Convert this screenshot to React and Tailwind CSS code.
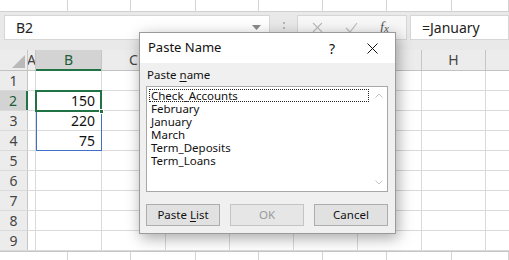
import React from "react";

const stripCols = [68, 63, 65, 63, 64, 64, 65, 57];
const gridCols = ["C", "D", "E", "F", "G", "H", ""];
const names = ["Check_Accounts", "February", "January", "March", "Term_Deposits", "Term_Loans"];
const values = { 2: "150", 3: "220", 4: "75" };

function Strip({ top }) {
  return (
    <div
      className={`flex bg-white ${top ? "h-[12px] border-b border-[#d0d0d0]" : "h-[9px] border-t border-[#c6c6c6]"}`}
    >
      {stripCols.map((w, i) => (
        <div
          key={i}
          style={{ width: w }}
          className="shrink-0 border-r border-[#d4d4d4]"
        />
      ))}
    </div>
  );
}

function FormulaBar() {
  return (
    <div className="h-[38px] bg-[#e9e9e9] flex items-start pt-[3px]">
      <div className="ml-[4px] w-[266px] h-[25px] bg-white border border-[#d6d6d6] flex items-center justify-between pl-[11px] pr-[8px]">
        <span className="text-[14px] text-[#222]">B2</span>
        <svg width="9" height="5" viewBox="0 0 9 5">
          <path d="M0 0h9L4.5 5z" fill="#8a8a8a" />
        </svg>
      </div>
      <div className="w-[27px] h-[25px] flex flex-col items-center justify-center gap-[3px]">
        <span className="w-[2px] h-[2px] bg-[#b5b5b5]" />
        <span className="w-[2px] h-[2px] bg-[#b5b5b5]" />
        <span className="w-[2px] h-[2px] bg-[#b5b5b5]" />
      </div>
      <div className="w-[110px] h-[25px] bg-[#f7f7f7] border border-[#d6d6d6] flex items-center pl-[14px] gap-[22px]">
        <svg width="11" height="11" viewBox="0 0 11 11">
          <path d="M1 1l9 9M10 1l-9 9" stroke="#bdbdbd" strokeWidth="1.2" />
        </svg>
        <svg width="13" height="11" viewBox="0 0 13 11">
          <path d="M1 6l4 4 7-9" stroke="#bdbdbd" strokeWidth="1.2" fill="none" />
        </svg>
        <span className="text-[14px] italic font-['Liberation_Serif',serif] text-[#555] leading-none">
          f<span className="text-[11px]">x</span>
        </span>
      </div>
      <div className="flex-1 ml-[3px] h-[25px] bg-white border border-[#d6d6d6] flex items-center pl-[11px]">
        <span className="text-[14px] text-[#222]">=January</span>
      </div>
    </div>
  );
}

function HeaderRow() {
  return (
    <div className="flex h-[21px] bg-[#ececec] border-b border-[#c2c2c2]">
      <div className="w-[28px] shrink-0 relative border-r border-[#c6c6c6]">
        <svg className="absolute right-[2px] bottom-[2px]" width="13" height="13" viewBox="0 0 13 13">
          <path d="M13 0V13H0z" fill="#b9b9b9" />
        </svg>
      </div>
      <div className="w-[8px] shrink-0 overflow-hidden border-r border-[#c6c6c6] flex justify-center">
        <span className="text-[14px] text-[#444] leading-[20px]">A</span>
      </div>
      <div className="w-[65px] shrink-0 bg-[#d3d3d3] border-b-2 border-[#217346] -mb-[1px] flex justify-center">
        <span className="text-[14px] text-[#1e5c3a] leading-[20px]">B</span>
      </div>
      {gridCols.map((c, i) => (
        <div key={i} className="w-[64px] shrink-0 border-l border-[#c6c6c6] flex justify-center">
          <span className="text-[14px] text-[#444] leading-[20px]">{c}</span>
        </div>
      ))}
    </div>
  );
}

function Row({ n }) {
  const sel = n === 2;
  return (
    <div className="flex h-[20px] border-b border-[#dadada]">
      <div
        className={`w-[28px] shrink-0 flex justify-center text-[14px] leading-[19px] ${
          sel
            ? "bg-[#d3d3d3] border-r-2 border-[#217346] text-[#1e5c3a]"
            : "bg-[#ececec] border-r border-[#c6c6c6] text-[#444]"
        }`}
      >
        {n}
      </div>
      <div className="w-[8px] shrink-0 border-r border-[#dadada]" />
      <div className="w-[65px] shrink-0 flex justify-end pr-[6px] text-[14px] leading-[19px] text-[#111]">
        {values[n] || ""}
      </div>
      {gridCols.map((c, i) => (
        <div key={i} className="w-[64px] shrink-0 border-l border-[#dadada]" />
      ))}
    </div>
  );
}

function PasteNameDialog() {
  return (
    <div className="absolute left-[139px] top-[32px] w-[257px] h-[202px] bg-[#f0f0f0] border border-[#9a9a9a] shadow-[2px_4px_14px_rgba(0,0,0,0.35)] flex flex-col font-['Noto_Sans',sans-serif]">
      <div className="h-[30px] bg-white flex items-center pl-[8px] shrink-0">
        <span className="text-[13px] text-[#111] flex-1">Paste Name</span>
        <span className="text-[14px] text-[#111] w-[20px] text-center mr-[25px]">?</span>
        <svg className="mr-[17px]" width="11" height="11" viewBox="0 0 11 11">
          <path d="M0.5 0.5l10 10M10.5 0.5l-10 10" stroke="#111" strokeWidth="1" />
        </svg>
      </div>
      <div className="flex-1 pl-[6px] pt-[4px]">
        <div className="text-[11.5px] leading-[16px] text-[#111] pl-[1px]">
          Paste <span className="underline underline-offset-2">n</span>ame
        </div>
        <div className="mt-[3px] w-[242px] h-[106px] bg-white border border-[#a8a8a8] flex">
          <div className="flex-1 pt-[2px] pl-[2px] pr-[1px]">
            {names.map((nm, i) => (
              <div
                key={nm}
                className={`h-[13px] text-[11.5px] leading-[13px] text-[#111] pl-[2px] ${
                  i === 0 ? "outline outline-1 outline-dotted outline-[#222] -outline-offset-1" : ""
                }`}
              >
                {nm}
              </div>
            ))}
          </div>
          <div className="w-[17px] flex flex-col items-center justify-between py-[6px]">
            <svg width="8" height="5" viewBox="0 0 8 5">
              <path d="M0.5 4.5L4 1l3.5 3.5" stroke="#c4c4c4" fill="none" />
            </svg>
            <svg width="8" height="5" viewBox="0 0 8 5">
              <path d="M0.5 0.5L4 4l3.5-3.5" stroke="#c4c4c4" fill="none" />
            </svg>
          </div>
        </div>
        <div className="flex gap-[10px] mt-[12px]">
          <button className="w-[74px] h-[22px] bg-[#e1e1e1] border border-[#adadad] text-[11.5px] text-[#111]">
            Paste <span className="underline underline-offset-2">L</span>ist
          </button>
          <button className="w-[74px] h-[22px] bg-[#e6e6e6] border border-[#c4c4c4] text-[11.5px] text-[#9a9a9a]">
            OK
          </button>
          <button className="w-[74px] h-[22px] bg-[#e1e1e1] border border-[#adadad] text-[11.5px] text-[#111]">
            Cancel
          </button>
        </div>
      </div>
    </div>
  );
}

export default function App() {
  return (
    <div className="relative w-[509px] h-[260px] overflow-hidden bg-white font-['Noto_Sans',sans-serif]">
      <Strip top />
      <FormulaBar />
      <div className="relative">
        <HeaderRow />
        {[1, 2, 3, 4, 5, 6, 7, 8, 9].map((n) => (
          <Row key={n} n={n} />
        ))}
        {/* named range outline B2:B4 */}
        <div className="absolute left-[36px] top-[41px] w-[66px] h-[60px] border border-[#3f6fc6]" />
        {/* active cell */}
        <div className="absolute left-[35px] top-[40px] w-[67px] h-[22px] border-2 border-[#217346]" />
        <div className="absolute left-[99px] top-[59px] w-[5px] h-[5px] bg-[#217346] border border-white" />
      </div>
      <Strip />
      <PasteNameDialog />
    </div>
  );
}
